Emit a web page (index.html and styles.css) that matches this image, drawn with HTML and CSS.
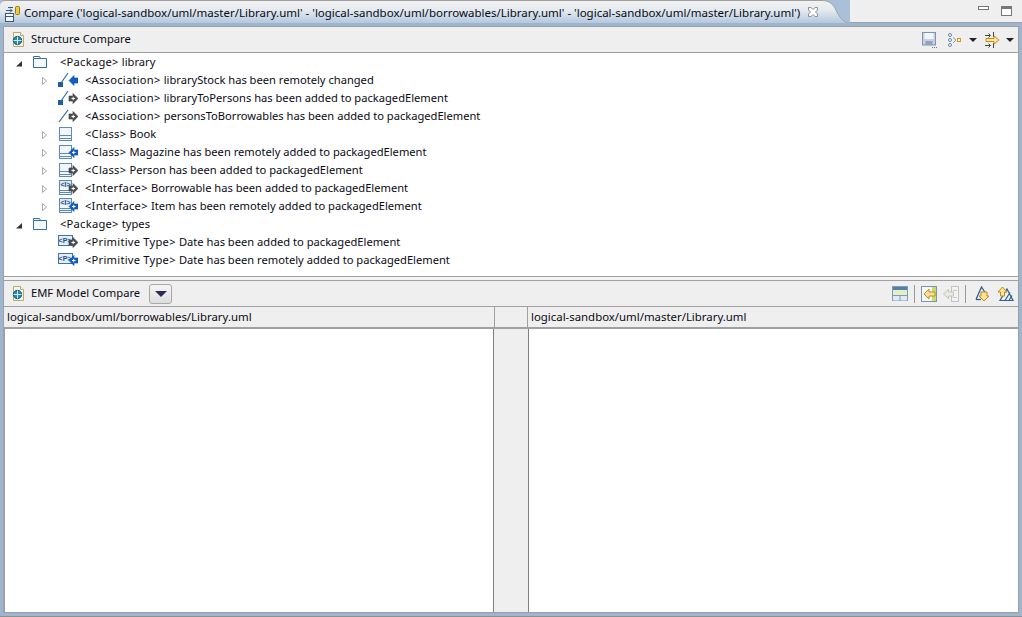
FILE: index.html
```html
<!DOCTYPE html>
<html lang="en">
<head>
  <meta charset="UTF-8" />
  <title>Compare Library.uml</title>
  <link rel="stylesheet" href="styles.css">
</head>
<body>
  <svg class="defs" width="0" height="0">
    <defs>
      <g id="arrow-local">
        <path d="M11 7h4V4.500l5 5-5 5V12h-4z" fill="#4c4f53" stroke="#3a3a3a" stroke-width=".6"/>
        <path d="M13.500 9.500h3.500M15.200 7.800v3.400" stroke="#fff"/>
      </g>
      <g id="arrow-remote">
        <path d="M20 7h-4V4.500l-5 5 5 5V12h4z" fill="#0f5fc4" stroke="#0a4a9c" stroke-width=".6"/>
        <path d="M14 9.500h3.500M15.700 7.800v3.400" stroke="#fff"/>
      </g>
      <g id="class-box">
        <rect x="1.500" y="2.500" width="12" height="13" fill="#f2f6fb" stroke="#5a8ab5"/>
        <path d="M2 10.500h11M2 13.500h11" stroke="#5a8ab5"/>
      </g>
      <g id="iface-box">
        <rect x="1.500" y="1.500" width="12" height="14" fill="#f2f6fb" stroke="#5a8ab5"/>
        <rect x="2" y="2" width="11" height="6" fill="#dbe7f3"/>
        <text x="7.500" y="7.500" class="mini">&lt;I&gt;</text>
        <path d="M2 11.500h11M2 13.500h11" stroke="#5a8ab5"/>
      </g>
      <g id="prim-box">
        <rect x="0.500" y="2.500" width="14" height="10" fill="#e4eef8" stroke="#3f74a8"/>
        <text x="7" y="10" class="mini">&lt;P&gt;</text>
      </g>
      <g id="compare-doc">
        <path d="M2.500 .5h7l3 3v11h-10z" fill="#fbf6e4" stroke="#b9a878"/>
        <path d="M9.500 .5v3h3" fill="#fff" stroke="#b9a878"/>
        <circle cx="6.500" cy="8.500" r="4.200" fill="#2b8aa8" stroke="#155a78"/>
        <path d="M2.500 8.500h8M6.500 4.500v8" stroke="#c8eaf2"/>
      </g>
      <path id="tw-closed" d="M2.500 6.500 6.500 10 2.500 13.500z" fill="#fff" stroke="#a8a8a8"/>
      <path id="tw-open" d="M1 13.500h6V8z" fill="#333"/>
      <path id="package" d="M.5 14.500v-9h13v9zM.5 5.500v-2h6l1 2" fill="#f6f9fc" stroke="#33709f"/>
    </defs>
  </svg>

  <div class="tabbar">
    <div class="tab">
      <svg class="tab-icon" width="18" height="18" viewBox="0 0 18 18">
        <rect x="1.500" y="8.500" width="8" height="8" fill="#f4f7fa" stroke="#38587c"/>
        <path d="M1.500 11.500h8" stroke="#38587c"/>
        <path d="M2 5.500h6M6 3.500l2 2-2 2M9 2.500H4" fill="none" stroke="#38587c"/>
        <rect x="11.500" y="1.500" width="4" height="8" rx="1" fill="#f3c93c" stroke="#9a7a14"/>
      </svg>
      <span class="tab-title">Compare ('logical-sandbox/uml/master/Library.uml' - 'logical-sandbox/uml/borrowables/Library.uml' - 'logical-sandbox/uml/master/Library.uml')</span>
      <svg class="tab-close" width="12" height="12" viewBox="0 0 12 12">
        <path d="M1.500 1.500h2.500l2 2 2-2h2.500V4l-2 2 2 2v2.500H8l-2-2-2 2H1.500V8l2-2-2-2z" fill="#fff" stroke="#8a8f96"/>
      </svg>
    </div>
    <svg class="tab-curve" width="28" height="26" viewBox="0 0 28 26">
      <defs>
        <linearGradient id="tabfill" x1="0" y1="0" x2="0" y2="1">
          <stop offset="0" stop-color="#f1f1f1"/>
          <stop offset=".35" stop-color="#e6ebf0"/>
          <stop offset="1" stop-color="#a9c0d8"/>
        </linearGradient>
      </defs>
      <path d="M0 0.500C6 0.500 10 3 13 8c3 7 7 14 15 15.500V26H0z" fill="url(#tabfill)"/>
      <path d="M0 0.500C6 0.500 10 3 13 8c3 7 7 14 15 15.500" fill="none" stroke="#a0a0a0"/>
    </svg>
    <div class="tab-rest">
      <svg class="win-btn" width="11" height="11" viewBox="0 0 11 11"><rect x=".5" y="1.500" width="10" height="3" fill="#fff" stroke="#777"/></svg>
      <svg class="win-btn" width="11" height="11" viewBox="0 0 11 11"><rect x=".5" y="1.500" width="10" height="9" fill="#fff" stroke="#777"/><path d="M.5 3h10" stroke="#777" stroke-width="2"/></svg>
    </div>
  </div>

  <div class="frame">
    <div class="pane-head">
      <svg class="head-icon" width="16" height="16" viewBox="0 0 16 16"><use href="#compare-doc"/></svg>
      <span class="head-title">Structure Compare</span>
      <div class="tools">
        <svg class="tool-save" width="16" height="16" viewBox="0 0 16 16">
          <rect x=".5" y=".5" width="13" height="12.500" fill="#c4d2e2" stroke="#7f93ad"/>
          <rect x="2.500" y="1" width="9" height="6" fill="#f2f5f9"/>
          <rect x="3.500" y="9" width="7" height="4" fill="#8ea3bc"/>
          <path d="M10 15.500h1M12 15.500h1M14 15.500h1" stroke="#5f7896"/>
        </svg>
        <svg class="tool-tree" width="16" height="16" viewBox="0 0 16 16">
          <circle cx="3" cy="3" r="1.500" fill="#fff" stroke="#5f86ad"/>
          <circle cx="3" cy="8" r="1.500" fill="#fff" stroke="#5f86ad"/>
          <circle cx="3" cy="13" r="1.500" fill="#fff" stroke="#5f86ad"/>
          <path d="M6 5.500 9 8 6 11" fill="none" stroke="#8a9bb0"/>
          <rect x="10.500" y="6.500" width="3" height="3" fill="#fff3c8" stroke="#c89a1e"/>
        </svg>
        <span class="drop"></span>
        <svg class="tool-merge" width="16" height="16" viewBox="0 0 16 16">
          <path d="M0 3.500h5M3.500 1.500l2 2-2 2M0 13.500h5M3.500 11.500l2 2-2 2M8.500 0v5M8.500 11v5" fill="none" stroke="#444"/>
          <path d="M1 6.500h8V4l5 4-5 4V9.500H1z" fill="#fbe7a4" stroke="#c48a14"/>
        </svg>
        <span class="drop"></span>
      </div>
    </div>

    <div class="tree">
      <div class="row lvl0"><svg class="twist" width="18" height="18" viewBox="0 0 18 18"><use href="#tw-open"/></svg><svg class="ico" width="20" height="18" viewBox="0 0 20 18"><use href="#package"/></svg><span class="label"><span class="kind">&lt;Package&gt; </span>library</span></div>
      <div class="row lvl1"><svg class="twist" width="18" height="18" viewBox="0 0 18 18"><use href="#tw-closed"/></svg><svg class="ico" width="20" height="18" viewBox="0 0 20 18"><rect y="11" width="5" height="5" fill="#1c5fa8"/><path d="M3 12 10 2" stroke="#2d6cae" stroke-width="1.200"/><path d="M20 7h-4V4.500l-5 5 5 5V12h4z" fill="#0f5fc4" stroke="#0a4a9c" stroke-width=".6"/></svg><span class="label"><span class="kind">&lt;Association&gt; </span>libraryStock has been remotely changed</span></div>
      <div class="row lvl1"><span class="no-twist"></span><svg class="ico" width="20" height="18" viewBox="0 0 20 18"><rect y="11" width="5" height="5" fill="#1c5fa8"/><path d="M3 12 10 2" stroke="#2d6cae" stroke-width="1.200"/><use href="#arrow-local"/></svg><span class="label"><span class="kind">&lt;Association&gt; </span>libraryToPersons has been added to packagedElement</span></div>
      <div class="row lvl1"><span class="no-twist"></span><svg class="ico" width="20" height="18" viewBox="0 0 20 18"><path d="M1 15 10 3" stroke="#2d6cae" stroke-width="1.200"/><use href="#arrow-local"/></svg><span class="label"><span class="kind">&lt;Association&gt; </span>personsToBorrowables has been added to packagedElement</span></div>
      <div class="row lvl1"><svg class="twist" width="18" height="18" viewBox="0 0 18 18"><use href="#tw-closed"/></svg><svg class="ico" width="20" height="18" viewBox="0 0 20 18"><use href="#class-box"/></svg><span class="label"><span class="kind">&lt;Class&gt; </span>Book</span></div>
      <div class="row lvl1"><svg class="twist" width="18" height="18" viewBox="0 0 18 18"><use href="#tw-closed"/></svg><svg class="ico" width="20" height="18" viewBox="0 0 20 18"><use href="#class-box"/><use href="#arrow-remote"/></svg><span class="label"><span class="kind">&lt;Class&gt; </span>Magazine has been remotely added to packagedElement</span></div>
      <div class="row lvl1"><svg class="twist" width="18" height="18" viewBox="0 0 18 18"><use href="#tw-closed"/></svg><svg class="ico" width="20" height="18" viewBox="0 0 20 18"><use href="#class-box"/><use href="#arrow-local"/></svg><span class="label"><span class="kind">&lt;Class&gt; </span>Person has been added to packagedElement</span></div>
      <div class="row lvl1"><svg class="twist" width="18" height="18" viewBox="0 0 18 18"><use href="#tw-closed"/></svg><svg class="ico" width="20" height="18" viewBox="0 0 20 18"><use href="#iface-box"/><use href="#arrow-local"/></svg><span class="label"><span class="kind">&lt;Interface&gt; </span>Borrowable has been added to packagedElement</span></div>
      <div class="row lvl1"><svg class="twist" width="18" height="18" viewBox="0 0 18 18"><use href="#tw-closed"/></svg><svg class="ico" width="20" height="18" viewBox="0 0 20 18"><use href="#iface-box"/><use href="#arrow-remote"/></svg><span class="label"><span class="kind">&lt;Interface&gt; </span>Item has been remotely added to packagedElement</span></div>
      <div class="row lvl0"><svg class="twist" width="18" height="18" viewBox="0 0 18 18"><use href="#tw-open"/></svg><svg class="ico" width="20" height="18" viewBox="0 0 20 18"><use href="#package"/></svg><span class="label"><span class="kind">&lt;Package&gt; </span>types</span></div>
      <div class="row lvl1"><span class="no-twist"></span><svg class="ico" width="20" height="18" viewBox="0 0 20 18"><use href="#prim-box"/><use href="#arrow-local"/></svg><span class="label"><span class="kind">&lt;Primitive Type&gt; </span>Date has been added to packagedElement</span></div>
      <div class="row lvl1"><span class="no-twist"></span><svg class="ico" width="20" height="18" viewBox="0 0 20 18"><use href="#prim-box"/><use href="#arrow-remote"/></svg><span class="label"><span class="kind">&lt;Primitive Type&gt; </span>Date has been remotely added to packagedElement</span></div>
    </div>

    <div class="sash"></div>

    <div class="pane-head second">
      <svg class="head-icon" width="16" height="16" viewBox="0 0 16 16"><use href="#compare-doc"/></svg>
      <span class="head-title">EMF Model Compare</span>
      <button class="view-btn"><span class="drop navy"></span></button>
      <div class="tools wide">
        <svg class="tool-layout" width="16" height="16" viewBox="0 0 16 16">
          <rect x=".5" y=".5" width="15" height="14" fill="#e6efc0" stroke="#7f9bb8"/>
          <rect x="1" y="1" width="14" height="3" fill="#4f7fae"/>
          <rect x="1" y="10" width="14" height="4.500" fill="#dfeaf5"/>
          <path d="M1 9.500h14M8 10v5" stroke="#7f9bb8"/>
        </svg>
        <span class="sep"></span>
        <svg width="16" height="16" viewBox="0 0 16 16">
          <rect x=".5" y=".5" width="15" height="15" fill="#f3f7fb" stroke="#7f93ad"/>
          <rect x="11" y="1" width="4" height="14" fill="#c4de6e"/>
          <path d="M3 8l5-5v3h6v4H8v3z" fill="#fbe19a" stroke="#c48a14"/>
        </svg>
        <svg width="16" height="16" viewBox="0 0 16 16">
          <rect x="8.500" y=".5" width="7" height="15" fill="#f2f2f2" stroke="#c2c2c2"/>
          <path d="M10 4.500h4M10 11.500h4" stroke="#c8c8c8"/>
          <path d="M.5 8l5-4.500V6h5v4h-5v2.500z" fill="#ebebe4" stroke="#c2c2b8"/>
        </svg>
        <span class="sep"></span>
        <svg width="18" height="16" viewBox="-3 0 18 16">
          <path d="M1 13.500 6.500 1 11 8" fill="none" stroke="#2c6098" stroke-width="1.300"/>
          <path d="M1 13.500h5" stroke="#2c6098" stroke-width="1.300"/>
          <path d="M8 6h4v4h2l-5 5-5-5h2V6z" fill="#fbe19a" stroke="#c48a14"/>
        </svg>
        <svg width="18" height="16" viewBox="-1 0 18 16">
          <path d="M3 14.500h13L10 3zM8 14.500l5-8M12 14.500l3-5" fill="none" stroke="#2c6098" stroke-width="1.200"/>
          <path d="M1 6l4.500-5L10 6H7.500v4h-4V6z" fill="#fbe19a" stroke="#c48a14"/>
        </svg>
      </div>
    </div>

    <div class="columns-head">
      <div class="col-title">logical-sandbox/uml/borrowables/Library.uml</div>
      <div class="col-gap"></div>
      <div class="col-title">logical-sandbox/uml/master/Library.uml</div>
    </div>
    <div class="columns">
      <div class="col-body"></div>
      <div class="col-mid"></div>
      <div class="col-body"></div>
    </div>
  </div>
</body>
</html>
```

FILE: styles.css
```css
html, body {
  margin: 0;
  height: 100%;
}
body {
  width: 1022px;
  height: 617px;
  overflow: hidden;
  display: flex;
  flex-direction: column;
  background: #efefef;
  box-shadow: inset 0 -1px #8f8f8f;
  font-family: "Noto Sans", sans-serif;
  font-size: 11.5px;
  color: #0a0a14;
}
.defs {
  display: block;
  height: 0;
  position: absolute;
}
.mini {
  font-family: "Liberation Sans", sans-serif;
  font-size: 7px;
  font-weight: bold;
  text-anchor: middle;
  fill: #1f4f80;
}

/* tab strip */
.tabbar {
  flex: none;
  height: 26px;
  display: flex;
  background: #a9c0d8;
}
.tab {
  width: 818px;
  flex: none;
  height: 25px;
  display: flex;
  align-items: center;
  border-top: 1px solid #a0a0a0;
  border-top-left-radius: 5px;
  background: linear-gradient(#f1f1f1, #e6ebf0 35%, #a9c0d8);
  padding-left: 4px;
}
.tab-icon {
  flex: none;
  margin-right: 2px;
}
.tab-title {
  white-space: nowrap;
  flex: none;
  padding-bottom: 2px;
}
.tab-close {
  flex: none;
  margin-left: 7px;
  margin-bottom: 3px;
}
.tab-curve {
  flex: none;
}
.tab-rest {
  flex: 1;
  height: 23px;
  display: flex;
  justify-content: flex-end;
  gap: 12px;
  box-sizing: border-box;
  padding: 5px 10px 0 0;
  background: #efefef;
  border-bottom: 1px solid #a0a0a0;
}

/* main frame */
.frame {
  flex: 1;
  min-height: 0;
  display: flex;
  flex-direction: column;
  background: #efefef;
  border: 1px solid #a0a0a0;
  box-shadow: 0 0 0 3px #9db6d0;
  margin: 0 3px 4px;
}
.pane-head {
  flex: none;
  height: 25px;
  display: flex;
  align-items: center;
  padding-left: 6px;
  border-bottom: 1px solid #a0a0a0;
}
.head-icon {
  flex: none;
  margin-right: 4px;
  margin-left: 1px;
}
.head-title {
  font-size: 11.2px;
  padding-bottom: 2px;
}
.tools {
  margin-left: auto;
  display: flex;
  align-items: center;
  gap: 5px;
  padding-right: 4px;
}
.tools.wide {
  gap: 6px;
}
.tool-save {
  margin-right: 4px;
}
.tool-tree {
  margin-right: 1px;
}
.tool-merge {
  margin-left: 3px;
}
.drop {
  width: 0;
  height: 0;
  border-left: 4px solid transparent;
  border-right: 4px solid transparent;
  border-top: 4px solid #222;
}
.drop.navy {
  display: block;
  border-left-width: 6px;
  border-right-width: 6px;
  border-top: 6px solid #2a2a5c;
}
.sep {
  width: 1px;
  height: 18px;
  background: #9a9a9a;
}

/* tree */
.tree {
  flex: none;
  height: 224px;
  background: #fff;
  border-bottom: 1px solid #a0a0a0;
  box-sizing: border-box;
}
.row {
  height: 18px;
  display: flex;
  align-items: center;
  white-space: nowrap;
}
.lvl0 { padding-left: 11px; }
.lvl1 { padding-left: 36px; }
.twist, .no-twist {
  flex: none;
  width: 18px;
  display: block;
}
.lvl0 .twist {
  width: 18px;
}
.ico {
  flex: none;
  margin-right: 7px;
}
.label {
  font-size: 11.15px;
  padding-bottom: 2px;
  white-space: pre;
}
.kind {
  letter-spacing: .25px;
}

/* sash + second pane */
.sash {
  flex: none;
  height: 4px;
  box-sizing: border-box;
  background: #f4f4f4;
  border-bottom: 1px solid #a0a0a0;
}
.view-btn {
  width: 23px;
  height: 20px;
  margin-left: 9px;
  padding: 0;
  display: flex;
  align-items: center;
  justify-content: center;
  background: linear-gradient(#f6f6f6, #dddddd);
  border: 1px solid #a8a8a8;
  border-radius: 3px;
}
.columns-head {
  flex: none;
  height: 20px;
  display: flex;
  border-bottom: 2px solid #a0a0a0;
}
.col-title {
  flex: 1;
  line-height: 20px;
  padding-left: 3px;
  white-space: nowrap;
  font-size: 11.4px;
}
.col-gap {
  flex: none;
  box-sizing: border-box;
  width: 34px;
  border-left: 1px solid #a0a0a0;
  border-right: 1px solid #a0a0a0;
}
.columns {
  flex: 1;
  min-height: 0;
  display: flex;
}
.col-body {
  flex: none;
  width: 489px;
  box-sizing: border-box;
  background: #fff;
}
.col-body:first-child {
  border-left: 1px solid #a0a0a0;
}
.col-mid {
  flex: none;
  box-sizing: border-box;
  width: 36px;
  background: #efefef;
  border-left: 1px solid #808080;
  border-right: 1px solid #808080;
}
```
